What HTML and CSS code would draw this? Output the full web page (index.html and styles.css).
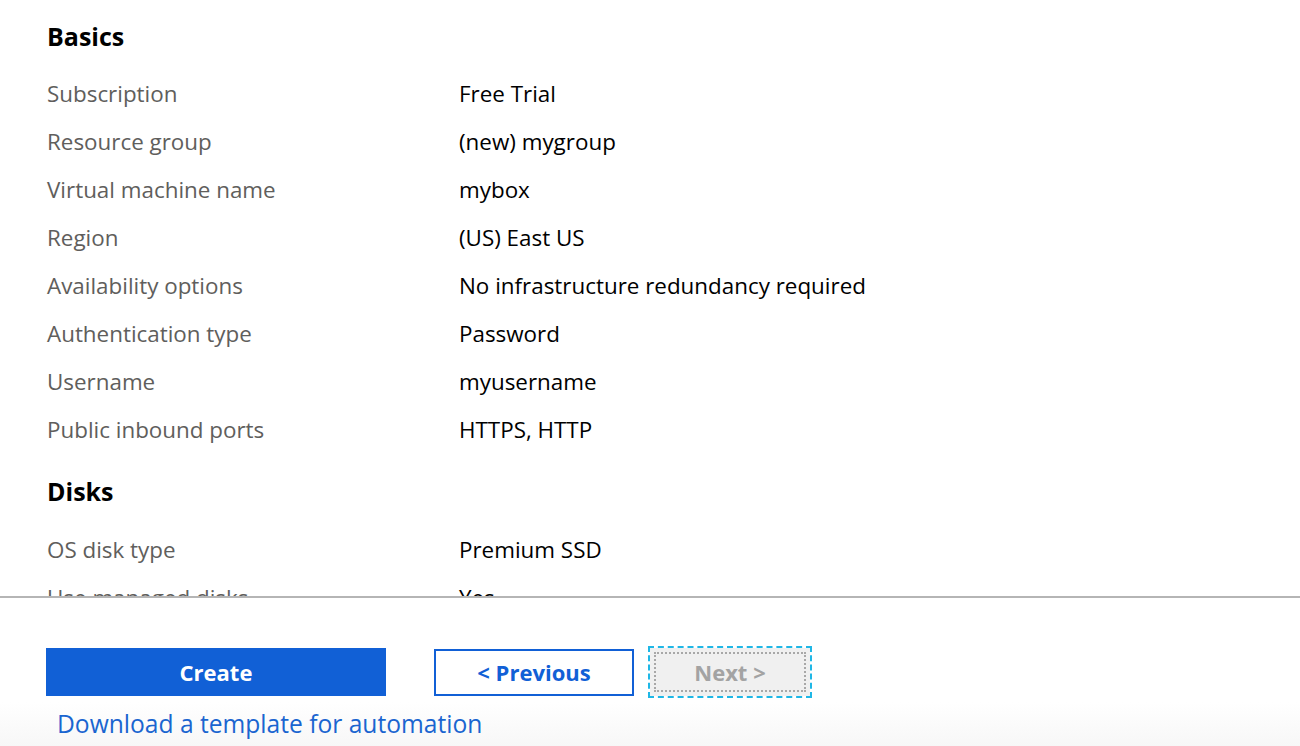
FILE: index.html
```html
<!DOCTYPE html>
<html lang="en">
<head>
<meta charset="utf-8">
<title>Review + create</title>
<link rel="stylesheet" href="styles.css">
</head>
<body>
<div class="page">
  <main class="summary">
    <h2 class="section-title">Basics</h2>
    <dl class="props">
      <div class="prop"><dt>Subscription</dt><dd>Free Trial</dd></div>
      <div class="prop"><dt>Resource group</dt><dd>(new) mygroup</dd></div>
      <div class="prop"><dt>Virtual machine name</dt><dd>mybox</dd></div>
      <div class="prop"><dt>Region</dt><dd>(US) East US</dd></div>
      <div class="prop"><dt>Availability options</dt><dd>No infrastructure redundancy required</dd></div>
      <div class="prop"><dt>Authentication type</dt><dd>Password</dd></div>
      <div class="prop"><dt>Username</dt><dd>myusername</dd></div>
      <div class="prop"><dt>Public inbound ports</dt><dd>HTTPS, HTTP</dd></div>
    </dl>
    <h2 class="section-title section-title-next">Disks</h2>
    <dl class="props">
      <div class="prop"><dt>OS disk type</dt><dd>Premium SSD</dd></div>
      <div class="prop"><dt>Use managed disks</dt><dd>Yes</dd></div>
    </dl>
  </main>
  <footer class="footer">
    <div class="actions">
      <button class="btn btn-primary" type="button">Create</button>
      <button class="btn btn-secondary" type="button">&lt; Previous</button>
      <button class="btn btn-disabled" type="button" disabled><span class="btn-focus">Next &gt;</span></button>
    </div>
    <a class="template-link" href="#">Download a template for automation</a>
  </footer>
</div>
</body>
</html>
```

FILE: styles.css
```css
html, body {
  margin: 0;
  padding: 0;
  height: 100%;
  overflow: hidden;
  background: #ffffff;
}

body {
  font-family: "Open Sans", "Noto Sans", "Liberation Sans", sans-serif;
}

.page {
  display: flex;
  flex-direction: column;
  height: 746px;
}

.summary {
  height: 596px;
  overflow: hidden;
  padding: 12px 0 0 47px;
  box-sizing: border-box;
}

.section-title {
  margin: 0 0 9px 0;
  font-size: 25px;
  line-height: 48px;
  font-weight: 700;
  color: #000000;
}

.section-title-next {
  margin-top: 14px;
  margin-bottom: 10px;
}

.props {
  margin: 0;
  display: flex;
  flex-direction: column;
}

.prop {
  display: flex;
  height: 48px;
  align-items: center;
}

.prop dt {
  width: 412px;
  font-size: 22.4px;
  color: #605e5c;
}

.prop dd {
  margin: 0;
  font-size: 22.4px;
  color: #000000;
}

.footer {
  flex: 1;
  border-top: 2px solid #b5b5b5;
  background: linear-gradient(to bottom, #ffffff 0px, #ffffff 104px, #f7f7f7 148px);
  padding: 50px 0 0 46px;
  box-sizing: border-box;
}

.actions {
  display: flex;
  align-items: center;
}

.btn {
  font-family: inherit;
  font-size: 22px;
  font-weight: 700;
  height: 48px;
  box-sizing: border-box;
  padding: 0;
  cursor: pointer;
}

.btn-primary {
  width: 340px;
  background: #1160d6;
  border: none;
  color: #ffffff;
}

.btn-secondary {
  width: 200px;
  height: 47px;
  margin-left: 48px;
  background: #ffffff;
  border: 2px solid #1160d6;
  color: #1160d6;
}

.btn-disabled {
  width: 160px;
  margin-left: 16px;
  padding: 4px;
  background: #f0f0f0;
  border: none;
  color: #a3a3a3;
  outline: 2px dashed #1fb7e6;
  outline-offset: 0;
}

.btn-focus {
  display: flex;
  align-items: center;
  justify-content: center;
  height: 100%;
  box-sizing: border-box;
  border: 2px dotted #a8a8a8;
}

.template-link {
  display: inline-block;
  margin: 14px 0 0 11px;
  font-size: 24.6px;
  line-height: 28px;
  color: #1a65d0;
  text-decoration: none;
}
```
